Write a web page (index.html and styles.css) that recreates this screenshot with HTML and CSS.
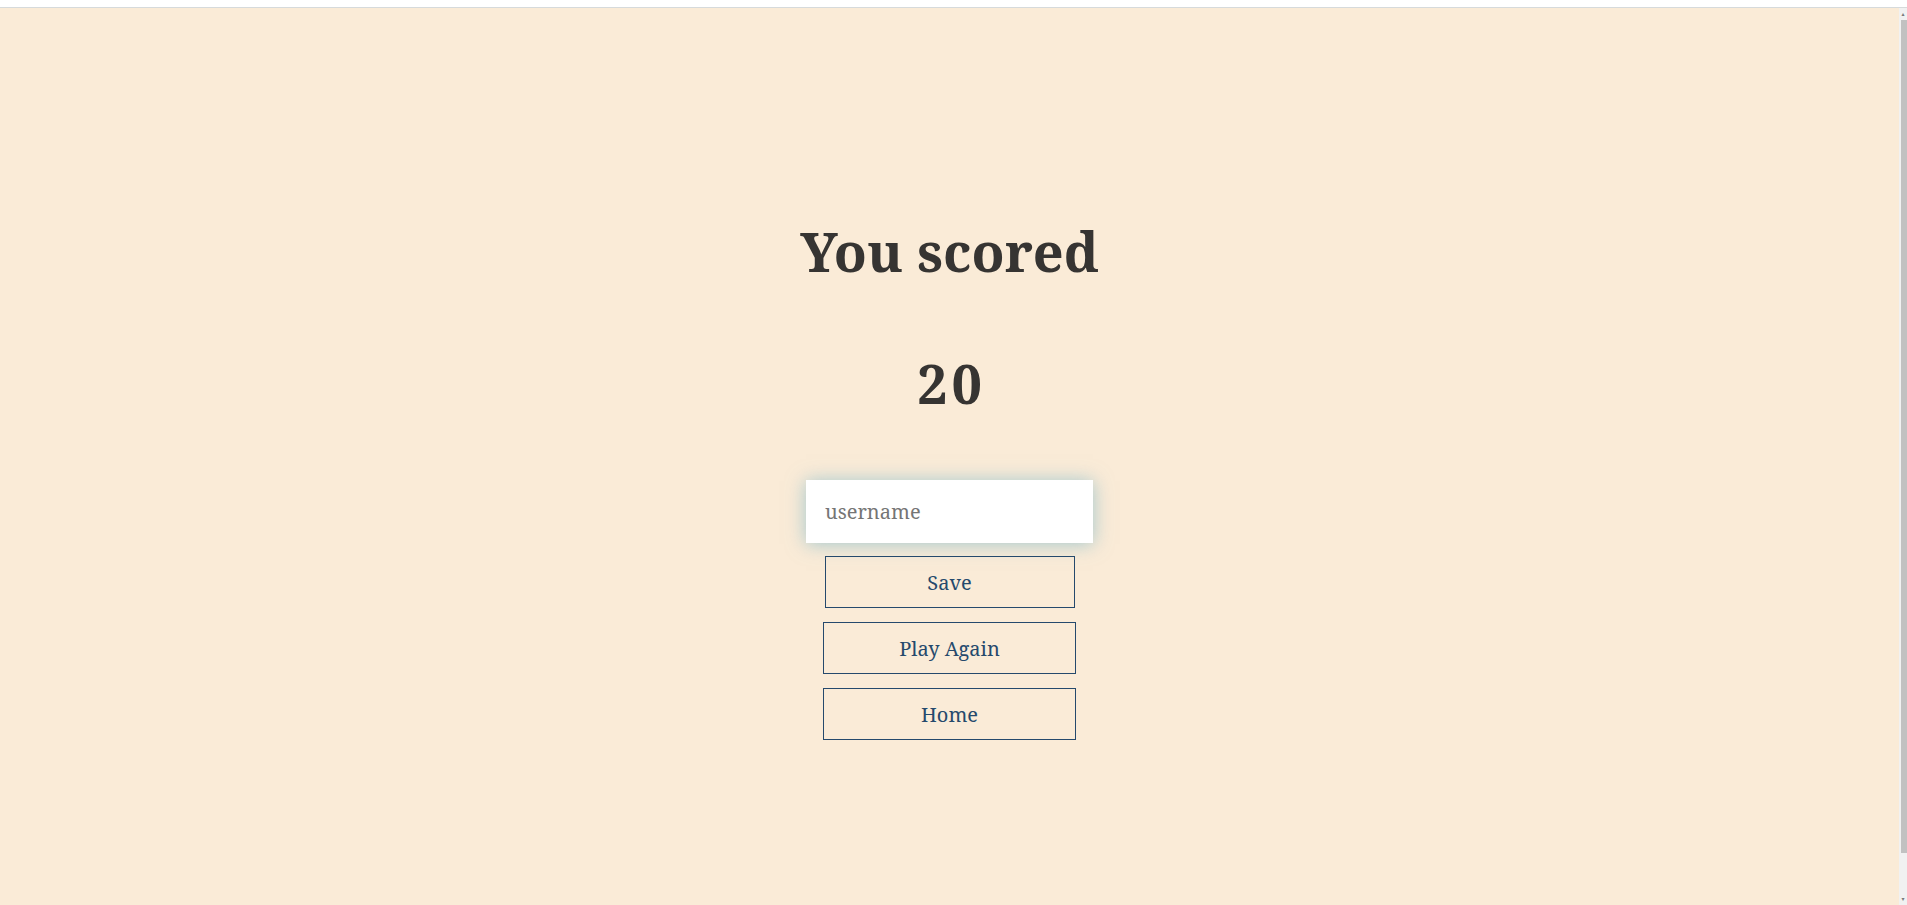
FILE: index.html
```html
<!DOCTYPE html>
<html lang="en">
<head>
<meta charset="utf-8">
<title>Quiz - End</title>
<link rel="stylesheet" href="styles.css">
</head>
<body>
<div class="topbar"></div>
<div class="frame">
  <main class="page">
    <div class="end">
      <h1 class="title">You scored</h1>
      <h1 class="score">20</h1>
      <form class="end-form">
        <input class="username" type="text" placeholder="username">
        <button class="btn btn-save" type="button">Save</button>
        <a class="btn" href="#">Play Again</a>
        <a class="btn" href="#">Home</a>
      </form>
    </div>
  </main>
  <div class="scrollbar">
    <div class="sb-arrow">&#9652;</div>
    <div class="sb-thumb"></div>
    <div class="sb-arrow sb-down">&#9662;</div>
  </div>
</div>
</body>
</html>
```

FILE: styles.css
```css
* { box-sizing: border-box; }
html, body { margin: 0; padding: 0; }
body {
  height: 905px;
  overflow: hidden;
  background: #ffffff;
  font-family: "Noto Serif", "DejaVu Serif", serif;
  color: #333333;
}
.topbar {
  height: 8px;
  background: #ffffff;
  border-bottom: 1px solid #d6dadb;
}
.frame {
  display: flex;
  height: 897px;
}
.page {
  flex: 1;
  background: #faebd7;
  display: flex;
  justify-content: center;
}
.end {
  display: flex;
  flex-direction: column;
  align-items: center;
  padding-top: 211px;
}
.title, .score {
  margin: 0;
  font-size: 54px;
  line-height: 1.2;
  font-weight: 700;
  color: #363432;
}
.score {
  margin-top: 67px;
  letter-spacing: 4px;
  padding-left: 4px;
}
.end-form {
  display: flex;
  flex-direction: column;
  align-items: center;
  margin-top: 64px;
}
.username {
  width: 287px;
  height: 63px;
  padding: 0 19px;
  border: none;
  outline: none;
  background: #ffffff;
  font-family: inherit;
  font-size: 20px;
  color: #333;
  box-shadow: 0 1px 18px 0 rgba(90, 170, 200, 0.55);
  margin-bottom: 13px;
}
.username::placeholder { color: #757575; }
.btn {
  display: flex;
  align-items: center;
  justify-content: center;
  width: 253px;
  height: 52px;
  border: 1px solid #25496c;
  background: transparent;
  color: #25496c;
  font-family: inherit;
  font-size: 20px;
  text-decoration: none;
  margin-bottom: 14px;
  padding: 2px 0 0;
}
.btn-save { width: 250px; }
.scrollbar {
  width: 8px;
  background: #f1f1f1;
  display: flex;
  flex-direction: column;
}
.sb-arrow {
  height: 12px;
  font-size: 6px;
  line-height: 12px;
  color: #7a7a7a;
  text-align: center;
}
.sb-thumb {
  flex: 1;
  margin: 0 0 40px 2px;
  background: #c1c1c1;
}
.sb-down { margin-top: auto; }
```
